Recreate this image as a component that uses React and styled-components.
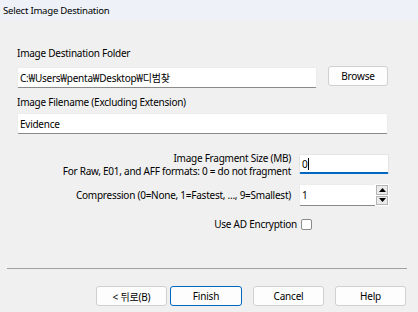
import React from 'react';
import styled, { createGlobalStyle } from 'styled-components';

const Global = createGlobalStyle`
  html, body {
    margin: 0;
    padding: 0;
    background: #f0f0f0;
  }
  body {
    font-family: "Noto Sans", "Noto Sans CJK KR", sans-serif;
    font-size: 10px;
    letter-spacing: -0.25px;
    color: #000;
  }
`;

const Window = styled.div`
  width: 418px;
  height: 312px;
  background: #f0f0f0;
  display: flex;
  flex-direction: column;
  overflow: hidden;
`;

const TitleBar = styled.div`
  height: 20px;
  flex: none;
  background: #eef2f8;
  padding-left: 3px;
  display: flex;
  align-items: center;
  font-size: 9.6px;
`;

const Body = styled.div`
  flex: 1;
  display: flex;
  flex-direction: column;
  padding: 26px 30px 0 17px;
`;

const Label = styled.div`
  height: 14px;
  line-height: 14px;
  margin-top: ${(p) => p.$top || 0}px;
  margin-bottom: ${(p) => p.$gap || 6}px;
`;

const Row = styled.div`
  display: flex;
  align-items: flex-start;
  gap: 11px;
`;

const TextInput = styled.div`
  box-sizing: border-box;
  height: ${(p) => p.$h || 21}px;
  flex: ${(p) => (p.$grow ? 1 : 'none')};
  margin-top: ${(p) => p.$top || 0}px;
  background: #fff;
  border: 1px solid ${(p) => (p.$focus ? '#e5e5e5' : '#ececec')};
  border-bottom: ${(p) => (p.$focus ? '2px solid #0067c0' : '1px solid #8a8a8a')};
  border-radius: 2px;
  padding: 0 2px;
  display: flex;
  align-items: center;
  position: relative;
`;

const Caret = styled.span`
  display: inline-block;
  width: 1px;
  height: 12px;
  background: #000;
  margin-left: 1px;
`;

const Button = styled.button`
  box-sizing: border-box;
  width: ${(p) => p.$w || 71}px;
  height: 20px;
  flex: none;
  background: #fdfdfd;
  border: 1px solid ${(p) => (p.$primary ? '#0067c0' : '#d0d0d0')};
  border-radius: 3px;
  font-family: inherit;
  font-size: 10px;
  letter-spacing: -0.2px;
  color: #000;
  padding: 0;
  margin-left: ${(p) => p.$ml || 0}px;
`;

const FieldGrid = styled.div`
  display: grid;
  grid-template-columns: 274px 90px;
  column-gap: 8px;
  align-items: ${(p) => p.$align || 'center'};
  margin-top: ${(p) => p.$top || 0}px;
`;

const RightLabel = styled.div`
  text-align: right;
  line-height: 13px;
  white-space: nowrap;
`;

const Spin = styled.div`
  position: absolute;
  right: -1px;
  top: -1px;
  bottom: -1px;
  width: 14px;
  display: flex;
  flex-direction: column;
  gap: 1px;
  padding: 1px;
  box-sizing: border-box;
  background: #fff;
`;

const SpinBtn = styled.div`
  flex: 1;
  background: #eaeaea;
  border: 1px solid #b4b4b4;
  display: flex;
  align-items: center;
  justify-content: center;
`;

const CheckRow = styled.div`
  display: flex;
  justify-content: flex-end;
  align-items: center;
  gap: 4px;
  height: 14px;
  padding-right: 76px;
  margin-top: 11px;
`;

const Check = styled.span`
  box-sizing: border-box;
  width: 11px;
  height: 11px;
  border: 1px solid #8a8a8a;
  border-radius: 2px;
  background: #fff;
`;

const Separator = styled.div`
  height: 1px;
  background: #a0a0a0;
  margin: 37px -19px 0 -10px;
`;

const Buttons = styled.div`
  display: flex;
  justify-content: flex-end;
  margin: 17px -18px 0 0;
`;

const Arrow = ({ down }) => (
  <svg width="7" height="4" viewBox="0 0 7 4">
    <path d={down ? 'M0 0h7L3.5 4z' : 'M3.5 0L7 4H0z'} fill="#000" />
  </svg>
);

export default function App() {
  return (
    <Window>
      <Global />
      <TitleBar>Select Image Destination</TitleBar>
      <Body>
        <Label $gap={6}>Image Destination Folder</Label>
        <Row>
          <TextInput $grow $top={1}>C:₩Users₩penta₩Desktop₩디범찾</TextInput>
          <Button $w={60}>Browse</Button>
        </Row>
        <Label $top={7} $gap={4}>Image Filename (Excluding Extension)</Label>
        <TextInput>Evidence</TextInput>
        <FieldGrid $align="start" $top={18}>
          <RightLabel>
            Image Fragment Size (MB)
            <br />
            For Raw, E01, and AFF formats: 0 = do not fragment
          </RightLabel>
          <TextInput $focus $h={20} $top={2}>
            0<Caret />
          </TextInput>
        </FieldGrid>
        <FieldGrid $top={6}>
          <RightLabel>Compression (0=None, 1=Fastest, ..., 9=Smallest)</RightLabel>
          <TextInput $h={22}>
            1
            <Spin>
              <SpinBtn>
                <Arrow />
              </SpinBtn>
              <SpinBtn>
                <Arrow down />
              </SpinBtn>
            </Spin>
          </TextInput>
        </FieldGrid>
        <CheckRow>
          Use AD Encryption
          <Check />
        </CheckRow>
        <Separator />
        <Buttons>
          <Button>&lt; 뒤로(B)</Button>
          <Button $primary $ml={3} $w={72}>Finish</Button>
          <Button $ml={11}>Cancel</Button>
          <Button $ml={11}>Help</Button>
        </Buttons>
      </Body>
    </Window>
  );
}
